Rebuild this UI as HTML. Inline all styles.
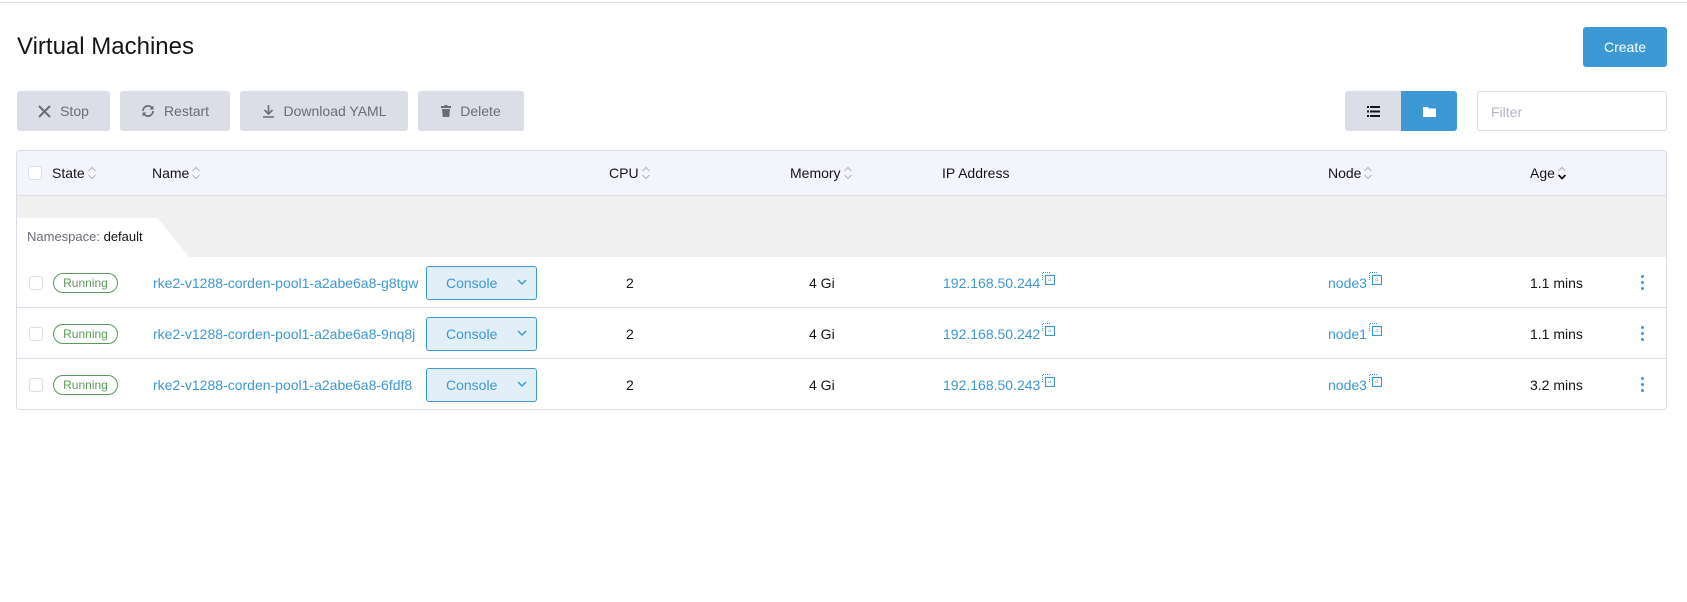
<!DOCTYPE html>
<html><head><meta charset="utf-8"><style>
*{box-sizing:border-box;margin:0;padding:0}
body{width:1687px;height:602px;background:#fff;font-family:"Liberation Sans",sans-serif;font-size:14px;color:#141419;position:relative;overflow:hidden}
.a{position:absolute}
.topline{left:0;top:2px;width:1687px;height:1px;background:#dcdee7}
h1{position:absolute;left:17px;top:33px;font-size:24px;font-weight:400;color:#141419}
.btn{position:absolute;top:91px;height:40px;background:#dcdee7;border-radius:3px;color:#6c6c76;font-size:14px;display:flex;align-items:center;justify-content:center;gap:9px}
.create{left:1583px;top:27px;width:84px;height:40px;background:#3d98d3;color:#fff;border-radius:3px;display:flex;align-items:center;justify-content:center}
.filter{left:1477px;top:91px;width:190px;height:40px;border:1px solid #dcdee7;border-radius:3px;color:#b6b6c2;padding:12px 13px}
.table{left:16px;top:150px;width:1651px;height:260px;border:1px solid #dcdee7;border-radius:4px;overflow:hidden}
.hdr{left:0;top:0;width:100%;height:45px;background:#f4f5fa;border-bottom:1px solid #dcdee7}
.band{left:0;top:45px;width:100%;height:61px;background:#f0f0f0}
.th{position:absolute;top:0;line-height:45px;color:#141419}
.sort{display:inline-block;vertical-align:middle;margin-left:2px;margin-top:-3px}
.cb{position:absolute;width:14px;height:14px;border:1px solid #dcdee7;border-radius:3px;background:#fff}
.row{left:0;width:100%;height:51px;border-bottom:1px solid #dcdee7;background:#fff}
.badge{position:absolute;left:36px;top:16px;width:65px;height:20px;border:1px solid #5d995d;border-radius:10px;color:#5d995d;font-size:12px;text-align:center;line-height:18px}
.lnk{color:#3d98d3}
.cell{position:absolute;top:1px;line-height:51px}
.console{position:absolute;left:409px;top:9px;width:111px;height:34px;background:#e3eff8;border:1px solid #3d98d3;border-radius:3px;color:#3d98d3;line-height:32px;padding-left:19px}
.console svg{position:absolute;right:9px;top:11px}
.cp{display:inline-block;vertical-align:3px;margin-left:2px}
.dots{position:absolute;left:1624px;top:18px;width:3px}
.dots i{display:block;width:3px;height:3px;background:#3d98d3;border-radius:50%;margin-bottom:3px}
</style></head><body>
<svg width="0" height="0" style="position:absolute"><defs>
<symbol id="s" viewBox="0 0 10 16"><path d="M1.5 6L5 2.5 8.5 6M1.5 10L5 13.5 8.5 10" fill="none" stroke="#b8b8c0" stroke-width="1.2"/></symbol>
<symbol id="sd" viewBox="0 0 10 16"><path d="M1.5 6L5 2.5 8.5 6" fill="none" stroke="#b8b8c0" stroke-width="1.2"/><path d="M1.5 10L5 13.5 8.5 10" fill="none" stroke="#141419" stroke-width="1.8"/></symbol>
<symbol id="c" viewBox="0 0 13 13"><path d="M1 0.5h1M3 0.5h1M5 0.5h1M7 0.5h1M0.5 1v1M0.5 3v1M0.5 5v1M0.5 7v1" stroke="#3d98d3" stroke-width="1"/><rect x="3.5" y="3.5" width="9" height="9" fill="none" stroke="#3d98d3" stroke-width="1.2"/><path d="M6 8h4M8 6v4" stroke="#3d98d3" stroke-width="0.8" stroke-dasharray="1 1"/></symbol>
</defs></svg>
<div class="a topline"></div>
<h1>Virtual Machines</h1>
<div class="a create">Create</div>
<div class="btn" style="left:17px;width:93px"><svg width="13" height="13"><path d="M1 1L12 12M12 1L1 12" stroke="#6c6c76" stroke-width="2"/></svg>Stop</div>
<div class="btn" style="left:120px;width:110px"><svg width="14" height="14" viewBox="0 0 14 14"><path d="M12 7A5 5 0 0 1 2.8 9.8M2 7A5 5 0 0 1 11.2 4.2" fill="none" stroke="#6c6c76" stroke-width="1.8"/><path d="M12.5 1.5v4h-4zM1.5 12.5v-4h4z" fill="#6c6c76"/></svg>Restart</div>
<div class="btn" style="left:240px;width:168px"><svg width="13" height="14"><path d="M6.5 1v9M2.5 6l4 4 4-4M1 13h11" fill="none" stroke="#6c6c76" stroke-width="1.6"/></svg>Download YAML</div>
<div class="btn" style="left:418px;width:106px"><svg width="10" height="12"><rect x="0" y="1" width="10" height="2" fill="#6c6c76"/><rect x="3.5" y="0" width="3" height="1.5" fill="#6c6c76"/><path d="M1 4h8l-0.7 8h-6.6z" fill="#6c6c76"/></svg>Delete</div>
<div class="btn" style="left:1345px;width:57px;border-radius:3px 0 0 3px;color:#141419">
<svg width="13" height="11"><rect x="0" y="0" width="2" height="2" fill="#141419"/><rect x="3" y="0" width="10" height="2" fill="#141419"/><rect x="0" y="4.5" width="2" height="2" fill="#141419"/><rect x="3" y="4.5" width="10" height="2" fill="#141419"/><rect x="0" y="9" width="2" height="2" fill="#141419"/><rect x="3" y="9" width="10" height="2" fill="#141419"/></svg></div>
<div class="btn" style="left:1401px;width:56px;background:#3d98d3;border-radius:0 3px 3px 0">
<svg width="13" height="11"><path d="M0 1h5l1 1.5h7v8.5h-13z" fill="#fff"/></svg></div>
<div class="a filter">Filter</div>

<div class="a table">
 <div class="a hdr">
  <div class="cb" style="left:11px;top:15px"></div>
  <div class="th" style="left:35px">State<svg class="sort" width="10" height="16"><use href="#s"/></svg></div>
  <div class="th" style="left:135px">Name<svg class="sort" width="10" height="16"><use href="#s"/></svg></div>
  <div class="th" style="left:592px">CPU<svg class="sort" width="10" height="16"><use href="#s"/></svg></div>
  <div class="th" style="left:773px">Memory<svg class="sort" width="10" height="16"><use href="#s"/></svg></div>
  <div class="th" style="left:925px">IP Address</div>
  <div class="th" style="left:1311px">Node<svg class="sort" width="10" height="16"><use href="#s"/></svg></div>
  <div class="th" style="left:1513px">Age<svg class="sort" width="10" height="16"><use href="#sd"/></svg></div>
 </div>
 <div class="a band">
  <svg class="a" style="left:0;top:22px" width="175" height="39"><path d="M0 0H141L172 39H0Z" fill="#fff"/></svg>
  <div class="a" style="left:10px;top:33px;color:#6c6c76;font-size:13px">Namespace: <span style="color:#141419">default</span></div>
 </div>
 <div class="a row" style="top:106px">
  <div class="cb" style="left:12px;top:19px"></div><div class="badge">Running</div>
  <div class="cell lnk" style="left:136px">rke2-v1288-corden-pool1-a2abe6a8-g8tgw</div>
  <div class="console">Console<svg width="10" height="8"><path d="M1 2l4 4 4-4" fill="none" stroke="#3d98d3" stroke-width="1.5"/></svg></div>
  <div class="cell" style="left:609px">2</div><div class="cell" style="left:792px">4 Gi</div>
  <div class="cell lnk" style="left:926px">192.168.50.244<svg class="cp" width="13" height="13"><use href="#c"/></svg></div>
  <div class="cell lnk" style="left:1311px">node3<svg class="cp" width="13" height="13"><use href="#c"/></svg></div>
  <div class="cell" style="left:1513px">1.1 mins</div>
  <div class="dots"><i></i><i></i><i></i></div>
 </div>
 <div class="a row" style="top:157px">
  <div class="cb" style="left:12px;top:19px"></div><div class="badge">Running</div>
  <div class="cell lnk" style="left:136px">rke2-v1288-corden-pool1-a2abe6a8-9nq8j</div>
  <div class="console">Console<svg width="10" height="8"><path d="M1 2l4 4 4-4" fill="none" stroke="#3d98d3" stroke-width="1.5"/></svg></div>
  <div class="cell" style="left:609px">2</div><div class="cell" style="left:792px">4 Gi</div>
  <div class="cell lnk" style="left:926px">192.168.50.242<svg class="cp" width="13" height="13"><use href="#c"/></svg></div>
  <div class="cell lnk" style="left:1311px">node1<svg class="cp" width="13" height="13"><use href="#c"/></svg></div>
  <div class="cell" style="left:1513px">1.1 mins</div>
  <div class="dots"><i></i><i></i><i></i></div>
 </div>
 <div class="a row" style="top:208px;border-bottom:none">
  <div class="cb" style="left:12px;top:19px"></div><div class="badge">Running</div>
  <div class="cell lnk" style="left:136px">rke2-v1288-corden-pool1-a2abe6a8-6fdf8</div>
  <div class="console">Console<svg width="10" height="8"><path d="M1 2l4 4 4-4" fill="none" stroke="#3d98d3" stroke-width="1.5"/></svg></div>
  <div class="cell" style="left:609px">2</div><div class="cell" style="left:792px">4 Gi</div>
  <div class="cell lnk" style="left:926px">192.168.50.243<svg class="cp" width="13" height="13"><use href="#c"/></svg></div>
  <div class="cell lnk" style="left:1311px">node3<svg class="cp" width="13" height="13"><use href="#c"/></svg></div>
  <div class="cell" style="left:1513px">3.2 mins</div>
  <div class="dots"><i></i><i></i><i></i></div>
 </div>
</div>
</body></html>
